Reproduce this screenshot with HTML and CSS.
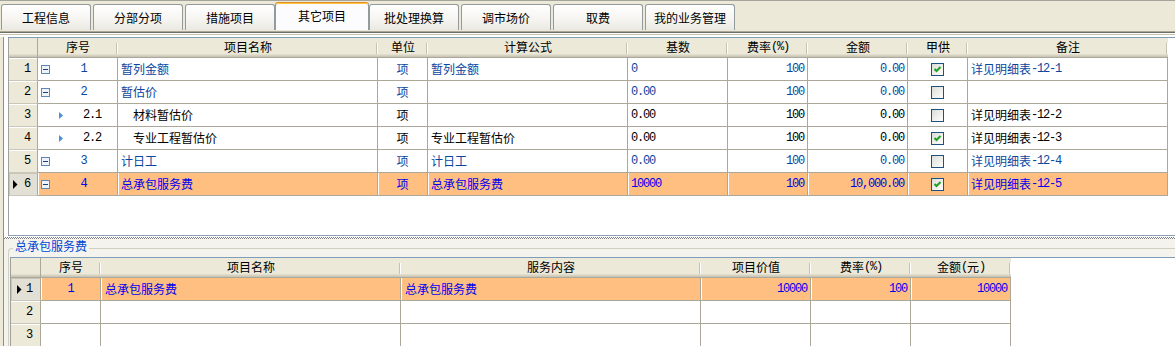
FILE: index.html
```html
<!DOCTYPE html>
<html lang="zh-CN">
<head>
<meta charset="utf-8">
<title>其它项目</title>
<link rel="stylesheet" href="styles.css">
</head>
<body>
<div class="tabbar">
  <div class="tab">工程信息</div>
  <div class="tab">分部分项</div>
  <div class="tab">措施项目</div>
  <div class="tab active">其它项目</div>
  <div class="tab">批处理换算</div>
  <div class="tab">调市场价</div>
  <div class="tab">取费</div>
  <div class="tab">我的业务管理</div>
</div>
<div class="sep"></div>
<div class="content">
  <div class="upper">
    <div class="grid g1">
      <div class="row head">
        <div class="hc corner"></div>
        <div class="hc">序号</div>
        <div class="hc">项目名称</div>
        <div class="hc">单位</div>
        <div class="hc">计算公式</div>
        <div class="hc">基数</div>
        <div class="hc">费率<span class="n">(%)</span></div>
        <div class="hc">金额</div>
        <div class="hc">甲供</div>
        <div class="hc">备注</div>
      </div>
      <div class="row blue">
        <div class="rh"><span class="n">1</span></div>
        <div class="c sn"><svg class="ico" width="9" height="9" viewBox="0 0 9 9"><rect x=".5" y=".5" width="8" height="8" fill="#EEF3FA" stroke="#5D87B5"/><path d="M2 4.5h5" stroke="#1B3F7A"/></svg><span class="snt n">1</span></div>
        <div class="c">暂列金额</div>
        <div class="c ctr">项</div>
        <div class="c">暂列金额</div>
        <div class="c"><span class="n">0</span></div>
        <div class="c r"><span class="n">100</span></div>
        <div class="c r"><span class="n">0.00</span></div>
        <div class="c ctr"><span class="cb"><svg width="11" height="11" viewBox="0 0 11 11"><path d="M2.5 5l2 2 4-4" fill="none" stroke="#21A121" stroke-width="2"/></svg></span></div>
        <div class="c">详见明细表<span class="n">-12-1</span></div>
      </div>
      <div class="row blue">
        <div class="rh"><span class="n">2</span></div>
        <div class="c sn"><svg class="ico" width="9" height="9" viewBox="0 0 9 9"><rect x=".5" y=".5" width="8" height="8" fill="#EEF3FA" stroke="#5D87B5"/><path d="M2 4.5h5" stroke="#1B3F7A"/></svg><span class="snt n">2</span></div>
        <div class="c">暂估价</div>
        <div class="c ctr">项</div>
        <div class="c"></div>
        <div class="c"><span class="n">0.00</span></div>
        <div class="c r"><span class="n">100</span></div>
        <div class="c r"><span class="n">0.00</span></div>
        <div class="c ctr"><span class="cb"></span></div>
        <div class="c"></div>
      </div>
      <div class="row">
        <div class="rh"><span class="n">3</span></div>
        <div class="c sn"><svg class="tri" width="4" height="7" viewBox="0 0 4 7"><path d="M0 0L4 3.5L0 7Z" fill="#4A8FD6"/></svg><span class="snc n">2.1</span></div>
        <div class="c sub">材料暂估价</div>
        <div class="c ctr">项</div>
        <div class="c"></div>
        <div class="c"><span class="n">0.00</span></div>
        <div class="c r"><span class="n">100</span></div>
        <div class="c r"><span class="n">0.00</span></div>
        <div class="c ctr"><span class="cb"></span></div>
        <div class="c">详见明细表<span class="n">-12-2</span></div>
      </div>
      <div class="row">
        <div class="rh"><span class="n">4</span></div>
        <div class="c sn"><svg class="tri" width="4" height="7" viewBox="0 0 4 7"><path d="M0 0L4 3.5L0 7Z" fill="#4A8FD6"/></svg><span class="snc n">2.2</span></div>
        <div class="c sub">专业工程暂估价</div>
        <div class="c ctr">项</div>
        <div class="c">专业工程暂估价</div>
        <div class="c"><span class="n">0.00</span></div>
        <div class="c r"><span class="n">100</span></div>
        <div class="c r"><span class="n">0.00</span></div>
        <div class="c ctr"><span class="cb"><svg width="11" height="11" viewBox="0 0 11 11"><path d="M2.5 5l2 2 4-4" fill="none" stroke="#21A121" stroke-width="2"/></svg></span></div>
        <div class="c">详见明细表<span class="n">-12-3</span></div>
      </div>
      <div class="row blue">
        <div class="rh"><span class="n">5</span></div>
        <div class="c sn"><svg class="ico" width="9" height="9" viewBox="0 0 9 9"><rect x=".5" y=".5" width="8" height="8" fill="#EEF3FA" stroke="#5D87B5"/><path d="M2 4.5h5" stroke="#1B3F7A"/></svg><span class="snt n">3</span></div>
        <div class="c">计日工</div>
        <div class="c ctr">项</div>
        <div class="c">计日工</div>
        <div class="c"><span class="n">0.00</span></div>
        <div class="c r"><span class="n">100</span></div>
        <div class="c r"><span class="n">0.00</span></div>
        <div class="c ctr"><span class="cb"></span></div>
        <div class="c">详见明细表<span class="n">-12-4</span></div>
      </div>
      <div class="row sel">
        <div class="rh"><svg width="5" height="9" viewBox="0 0 5 9"><path d="M0 0L4.5 4.5L0 9Z" fill="#000"/></svg><span class="n">6</span></div>
        <div class="c sn"><svg class="ico" width="9" height="9" viewBox="0 0 9 9"><rect x=".5" y=".5" width="8" height="8" fill="#EEF3FA" stroke="#5D87B5"/><path d="M2 4.5h5" stroke="#1B3F7A"/></svg><span class="snt n">4</span></div>
        <div class="c">总承包服务费</div>
        <div class="c ctr">项</div>
        <div class="c">总承包服务费</div>
        <div class="c"><span class="n">10000</span></div>
        <div class="c r"><span class="n">100</span></div>
        <div class="c r"><span class="n">10,000.00</span></div>
        <div class="c ctr"><span class="cb"><svg width="11" height="11" viewBox="0 0 11 11"><path d="M2.5 5l2 2 4-4" fill="none" stroke="#21A121" stroke-width="2"/></svg></span></div>
        <div class="c">详见明细表<span class="n">-12-5</span></div>
      </div>
    </div>
  </div>
  <div class="splitter"></div>
  <div class="lowerwrap">
    <fieldset class="group">
      <legend>总承包服务费</legend>
      <div class="lower">
        <div class="grid g2">
          <div class="row head">
            <div class="hc corner"></div>
            <div class="hc">序号</div>
            <div class="hc">项目名称</div>
            <div class="hc">服务内容</div>
            <div class="hc">项目价值</div>
            <div class="hc">费率<span class="n">(%)</span></div>
            <div class="hc">金额<span class="n">(</span>元<span class="n">)</span></div>
          </div>
          <div class="row sel">
            <div class="rh"><svg width="5" height="9" viewBox="0 0 5 9"><path d="M0 0L4.5 4.5L0 9Z" fill="#000"/></svg><span class="n">1</span></div>
            <div class="c ctr"><span class="n">1</span></div>
            <div class="c">总承包服务费</div>
            <div class="c">总承包服务费</div>
            <div class="c r"><span class="n">10000</span></div>
            <div class="c r"><span class="n">100</span></div>
            <div class="c r"><span class="n">10000</span></div>
          </div>
          <div class="row">
            <div class="rh"><span class="n">2</span></div>
            <div class="c"></div><div class="c"></div><div class="c"></div><div class="c"></div><div class="c"></div><div class="c"></div>
          </div>
          <div class="row">
            <div class="rh"><span class="n">3</span></div>
            <div class="c"></div><div class="c"></div><div class="c"></div><div class="c"></div><div class="c"></div><div class="c"></div>
          </div>
        </div>
      </div>
    </fieldset>
  </div>
</div>
</body>
</html>
```

FILE: styles.css
```css
* { box-sizing: border-box; }
html, body { margin: 0; padding: 0; }
body {
  width: 1175px;
  height: 346px;
  overflow: hidden;
  background: #ECE9D8;
  font-family: "Noto Sans CJK SC", sans-serif;
  font-size: 12px;
  color: #000;
}
.n {
  font-family: "Liberation Mono", monospace;
  font-size: 12px;
  letter-spacing: -1.2px;
}

/* tabs */
.tabbar {
  height: 30px;
  border-top: 1px solid #A5A49C;
  display: flex;
  align-items: flex-end;
  gap: 2px;
  padding-left: 1px;
}
.tab {
  width: 90px;
  height: 26px;
  border: 1px solid #919B9C;
  border-bottom: none;
  border-radius: 3px 3px 0 0;
  background: linear-gradient(#FFFFFF, #F5F4F0 60%, #E9E8E1);
  display: flex;
  align-items: center;
  justify-content: center;
  line-height: 14px;
}
.tab.active {
  width: 94px;
  height: 28px;
  margin: 0 -2px;
  background: #FCFCFE;
  border-top-color: #E68B2C;
  box-shadow: inset 0 1px 0 #FFC83C;
  position: relative;
  z-index: 1;
  padding-bottom: 2px;
}
.sep {
  height: 7px;
  background: linear-gradient(#ECE9D8 0 1px, #ACA899 1px 2px, #716F64 2px 3px, #FFFFFF 3px 4px, #C7C4B6 4px 5px, #FFFFFF 5px 7px);
}

/* main */
.content {
  margin-left: 3px;
  border-left: 1px solid #8E8D86;
  background: #FFFFFF;
  height: 309px;
  display: flex;
  flex-direction: column;
}
.upper {
  margin-left: 4px;
  height: 199px;
  flex: none;
  border-top: 1px solid #7F9DB9;
  border-left: 1px solid #A0A0A0;
  border-bottom: 1px solid #8A9EB5;
  background: #FFFFFF;
}
.splitter {
  height: 4px;
  flex: none;
  border-top: 1px solid #FFFFFF;
  border-bottom: 1px solid #F4F3EE;
  background: repeating-conic-gradient(#808080 0 25%, #FFFFFF 0 50%) 0 0 / 2px 2px;
}
.lowerwrap {
  flex: 1;
  background: #F4F3EE;
  padding-left: 4px;
}
.group {
  margin: 0;
  padding: 1px 0 0 1px;
  border: 1px solid #D0D0BF;
  border-right: none;
  border-bottom: none;
  border-radius: 4px 0 0 0;
  height: 100%;
  min-width: 0;
}
.group legend {
  margin-left: 3px;
  padding: 0 2px 4px;
  line-height: 12px;
  color: #0046D5;
}
.lower {
  background: #FFFFFF;
  border-top: 1px solid #7F9DB9;
  border-left: 1px solid #A0A0A0;
  height: 100%;
}

/* grids */
.g1 { width: 1159px; }
.g2 { width: 1000px; }
.row {
  display: grid;
  height: 23px;
}
.g1 .row { grid-template-columns: 29px 80px 260px 50px 200px 100px 80px 100px 60px 200px; }
.g2 .row { grid-template-columns: 30px 60px 300px 300px 110px 100px 100px; }
.row.head {
  height: 20px;
  background: linear-gradient(#ECE9D8 0 16px, #E2DECD 16px 17px, #D6D2C2 17px 18px, #CBC7B8 18px 19px, #ACA899 19px 20px);
}
.hc {
  display: flex;
  align-items: center;
  justify-content: center;
  line-height: 14px;
  padding-bottom: 2px;
  white-space: nowrap;
  background:
    linear-gradient(#C5C2B2, #C5C2B2) no-repeat right 1px top 5px / 1px 11px,
    linear-gradient(#FFFFFF, #FFFFFF) no-repeat right 0 top 5px / 1px 11px;
}
.hc.corner {
  background: none;
  border-right: 1px solid #ACA899;
}
.c {
  border-right: 1px solid #ACA899;
  border-bottom: 1px solid #ACA899;
  display: flex;
  align-items: center;
  padding: 0 3px;
  white-space: nowrap;
  overflow: hidden;
  line-height: 14px;
}
.g2 .c { padding: 0 4px; }
.c.r { justify-content: flex-end; padding-right: 3px; }
.c.ctr { justify-content: center; }
.c.sub { padding-left: 15px; }
.rh {
  background: #ECE9D8;
  border-right: 1px solid #ACA899;
  border-bottom: 1px solid #CBC7B8;
  box-shadow: inset 0 1px 0 #FFFFFF;
  display: flex;
  align-items: center;
  justify-content: flex-end;
  padding-right: 7px;
  line-height: 14px;
}
.g2 .rh { padding-right: 8px; }
.sel .rh {
  background: #E2E0D4;
  justify-content: space-between;
  padding-left: 4px;
  box-shadow: inset 1px 1px 0 #C9C6B7;
}
.g2 .sel .rh { padding-left: 6px; }
.row.blue .c { color: #0A46A0; }
.row.sel .c {
  background: #FFBF80;
  box-shadow: inset 1px 0 0 #FFFFFF;
  color: #0000F0;
}
.sn { padding: 0; }
.sn .ico { margin-left: 3px; flex: none; }
.sn .snt { flex: 1; text-align: center; }
.sn .tri { margin-left: 21px; flex: none; }
.sn .snc { margin-left: 20px; }
.cb {
  width: 13px;
  height: 13px;
  border: 1px solid #1C5180;
  background: linear-gradient(135deg, #DCDCD7, #FFFFFF);
  display: flex;
}
```
